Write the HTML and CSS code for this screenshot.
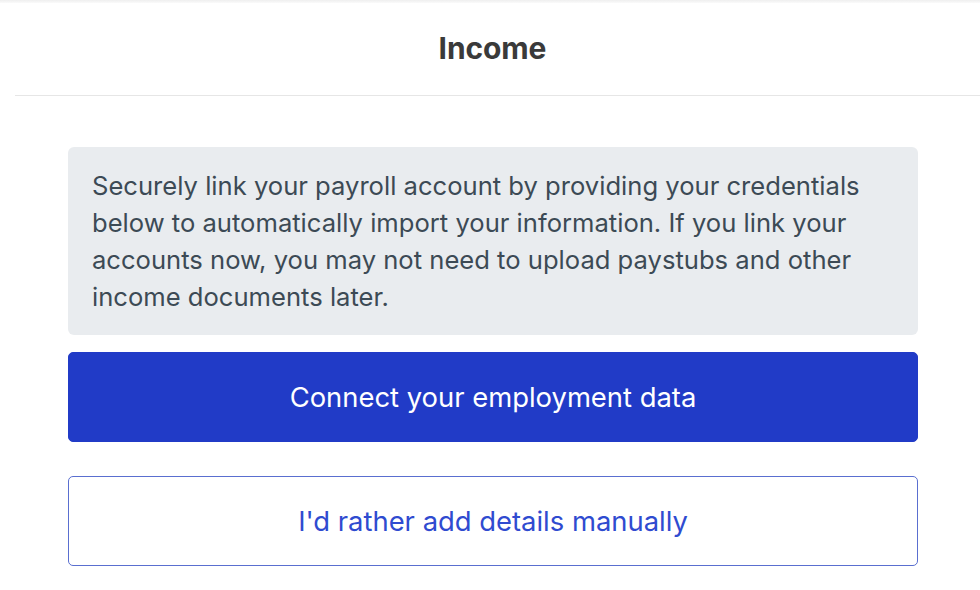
FILE: index.html
```html
<!DOCTYPE html>
<html lang="en">
<head>
<meta charset="utf-8">
<title>Income</title>
<link rel="stylesheet" href="styles.css">
</head>
<body>
<div class="page">
  <div class="topbar"></div>
  <header class="header">
    <h1 class="title">Income</h1>
  </header>
  <main class="content">
    <div class="info">
      Securely link your payroll account by providing your credentials below to automatically import your information. If you link your accounts now, you may not need to upload paystubs and other income documents later.
    </div>
    <button class="btn btn-primary">Connect your employment data</button>
    <button class="btn btn-secondary">I'd rather add details manually</button>
  </main>
</div>
</body>
</html>
```

FILE: styles.css
```css
html, body {
  margin: 0;
  padding: 0;
  background: #ffffff;
}
body {
  font-family: Inter, "Noto Sans", "Liberation Sans", sans-serif;
  width: 980px;
  height: 590px;
  overflow: hidden;
}
.page {
  display: flex;
  flex-direction: column;
}
.topbar {
  height: 3px;
  background: linear-gradient(#efefef, #fafafa);
}
.header {
  height: 92px;
  margin-left: 15px;
  border-bottom: 1px solid #e6e6e6;
  display: flex;
  align-items: center;
  justify-content: center;
  padding-right: 10px;
}
.title {
  margin: 0;
  font-size: 30px;
  font-weight: 700;
  color: #3a3a3a;
  letter-spacing: -0.1px;
  position: relative;
  top: -1px;
}
.content {
  display: flex;
  flex-direction: column;
  padding: 51px 62px 0 68px;
}
.info {
  background: #e9ecef;
  border-radius: 6px;
  padding: 20px 24px 20px 24px;
  font-size: 25.6px;
  line-height: 37px;
  color: #3c4a55;
}
.btn {
  font-family: inherit;
  width: 100%;
  height: 90px;
  border-radius: 5px;
  font-size: 27.4px;
  cursor: pointer;
}
.btn-primary {
  margin-top: 17px;
  background: #213bc7;
  color: #ffffff;
  border: 1px solid #213bc7;
}
.btn-secondary {
  margin-top: 34px;
  background: #ffffff;
  color: #2f4bd0;
  border: 1px solid #5a6fd0;
}
```
